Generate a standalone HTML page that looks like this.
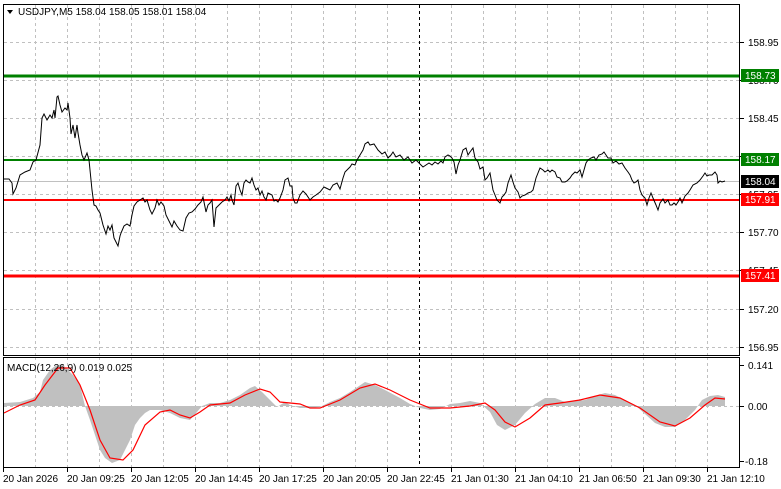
<!DOCTYPE html>
<html><head><meta charset="utf-8"><style>
html,body{margin:0;padding:0;background:#fff;width:781px;height:489px;overflow:hidden}
svg{display:block;font-family:"Liberation Sans","DejaVu Sans",sans-serif}
</style></head><body>
<svg width="781" height="489" viewBox="0 0 781 489" xmlns="http://www.w3.org/2000/svg">
<rect width="781" height="489" fill="#fff"/>
<g stroke="#c0c0c0" stroke-width="1" stroke-dasharray="3,3" fill="none">
<path d="M35.5 5V355M67.5 5V355M99.5 5V355M131.5 5V355M163.5 5V355M195.5 5V355M227.5 5V355M259.5 5V355M291.5 5V355M323.5 5V355M355.5 5V355M387.5 5V355M451.5 5V355M483.5 5V355M515.5 5V355M547.5 5V355M579.5 5V355M611.5 5V355M643.5 5V355M675.5 5V355M707.5 5V355"/>
<path d="M35.5 357V467M67.5 357V467M99.5 357V467M131.5 357V467M163.5 357V467M195.5 357V467M227.5 357V467M259.5 357V467M291.5 357V467M323.5 357V467M355.5 357V467M387.5 357V467M451.5 357V467M483.5 357V467M515.5 357V467M547.5 357V467M579.5 357V467M611.5 357V467M643.5 357V467M675.5 357V467M707.5 357V467"/>
<path d="M4 42.5H740M4 80.5H740M4 118.5H740M4 156.5H740M4 194.5H740M4 232.5H740M4 270.5H740M4 309.5H740M4 347.5H740M4 406.5H740"/>
</g>
<path d="M419.5 5V467" stroke="#000" stroke-dasharray="3,3"/>
<line x1="4" y1="181.5" x2="740" y2="181.5" stroke="#c0c0c0"/>
<line x1="4" y1="76" x2="740" y2="76" stroke="#008000" stroke-width="3"/>
<line x1="4" y1="160" x2="740" y2="160" stroke="#008000" stroke-width="2"/>
<line x1="4" y1="200" x2="740" y2="200" stroke="#ff0000" stroke-width="2"/>
<line x1="4" y1="276" x2="740" y2="276" stroke="#ff0000" stroke-width="3"/>
<polyline fill="none" stroke="#000" stroke-width="1" points="3,179 9,179 12,183 13,194 16,188 20,175 25,172 30,170 33,162 36,160 40,145 42,118 44,114 47,120 50,115 52,118 54,110 55,118 57,97 58,96 60,105 62,112 65,108 67,110 68,103 70,118 71,134 73,125 75,138 77,125 78,133 80,145 82,155 84,160 87,153 89,160 92,190 94,205 96,206 98,210 100,213 103,225 106,234 108,226 110,230 112,225 114,238 116,242 118,246 120,236 121,233 124,226 127,224 130,226 132,215 134,206 137,202 140,200 143,198 145,202 147,200 150,210 152,214 155,208 157,200 159,205 161,202 164,206 166,215 170,223 172,227 174,221 177,226 180,230 183,231 186,218 189,213 192,212 195,209 198,205 201,202 203,197 206,212 208,205 210,203 212,200 214,227 216,208 218,206 220,204 222,202 225,200 227,197 229,201 231,195 232,200 234,205 236,186 238,183 240,190 242,195 244,183 246,180 248,182 250,183 252,178 254,185 256,190 258,188 260,195 262,191 264,197 266,200 268,193 272,195 274,201 276,200 278,202 280,198 283,190 285,180 288,178 290,186 292,186 293,198 295,203 297,203 300,195 303,191 306,194 310,200 313,197 316,195 320,192 324,187 326,188 330,190 333,185 337,183 340,189 343,178 345,172 347,170 350,167 352,164 355,165 357,160 360,155 363,150 365,144 368,142 370,145 374,144 378,150 382,154 385,152 388,158 391,155 393,152 396,157 400,155 404,160 408,157 412,163 416,160 419,163 423,167 426,165 429,163 432,165 435,162 438,164 441,161 443,163 445,157 448,155 450,156 452,158 454,162 456,174 458,165 460,160 463,150 466,148 468,155 470,152 473,148 475,158 478,162 480,169 483,167 485,180 487,178 490,173 493,190 495,195 497,200 500,203 502,197 504,195 506,192 508,183 511,175 513,182 515,188 518,192 520,198 522,196 525,195 528,193 531,192 533,190 536,178 540,168 543,170 545,172 548,170 550,172 552,170 555,172 557,177 560,178 562,182 565,182 567,181 570,178 572,175 575,172 577,173 580,170 582,177 584,170 586,163 588,160 591,158 594,157 596,160 599,155 602,154 604,152 606,155 608,158 611,158 613,163 616,161 619,164 622,163 625,168 628,172 630,175 632,180 634,183 636,182 638,180 640,190 642,195 645,198 647,205 649,198 651,193 653,198 656,205 658,210 660,203 663,199 665,203 668,200 670,205 672,205 674,203 676,205 678,202 680,198 682,203 685,196 688,193 690,190 693,185 697,183 700,180 703,176 705,173 707,176 709,175 712,175 715,172 717,175 718,183 720,181 722,182 725,181"/>
<polygon fill="#c0c0c0" points="4,406 4,403 20,402 33,398 40,392 43,380 50,370 55,366 62,364 68,370 73,375 80,385 85,406 90,420 95,435 100,450 105,458 112,463 120,460 125,450 130,440 135,425 140,418 145,413 150,410 160,410 170,413 180,418 190,420 197,412 202,406 210,403 220,403 230,400 240,395 250,388 255,386 262,392 270,400 277,407 285,402 290,405 300,408 310,408 320,407 330,402 340,398 350,392 365,382 375,385 385,390 400,398 410,404 420,408 430,410 440,409 450,404 460,403 470,401 480,403 490,412 497,425 505,430 515,425 525,413 535,404 545,398 555,398 565,402 575,401 585,400 595,396 605,393 615,395 625,400 635,405 645,414 655,423 665,427 675,427 685,420 695,410 702,400 710,396 718,395 725,397 725,406"/>
<polyline fill="none" stroke="#ff0000" stroke-width="1.2" points="4,413 20,405 35,400 45,385 58,368 70,368 80,385 90,410 100,440 110,458 123,460 133,450 145,425 160,412 170,410 180,415 190,418 200,412 210,405 230,403 245,395 260,389 270,392 280,402 300,404 310,408 320,408 340,400 360,388 375,384 390,390 410,400 430,408 450,408 470,406 485,403 495,410 505,422 515,427 530,418 545,405 560,403 580,400 600,395 620,398 640,408 660,422 675,426 690,418 705,405 715,398 725,399"/>
<g stroke="#000" fill="none" stroke-width="1">
<rect x="3.5" y="4.5" width="736" height="351"/>
<rect x="3.5" y="357.5" width="736" height="110"/>
<path d="M3.5 468V472M67.5 468V472M131.5 468V472M195.5 468V472M259.5 468V472M323.5 468V472M387.5 468V472M451.5 468V472M515.5 468V472M579.5 468V472M643.5 468V472M707.5 468V472"/>
<path d="M740 42.5H744M740 80.5H744M740 118.5H744M740 156.5H744M740 194.5H744M740 232.5H744M740 270.5H744M740 309.5H744M740 347.5H744M740 365.5H744M740 406.5H744M740 461.5H744"/>
</g>
<g font-size="10" fill="#000">
<text x="748" y="46">158.95</text>
<text x="748" y="84">158.70</text>
<text x="748" y="122">158.45</text>
<text x="748" y="198">157.95</text>
<text x="748" y="236">157.70</text>
<text x="748" y="274">157.45</text>
<text x="748" y="313">157.20</text>
<text x="748" y="351">156.95</text>
<text x="748" y="369">0.141</text>
<text x="748" y="410">0.00</text>
<text x="745" y="465">-0.18</text>
</g>
<g font-size="10" fill="#fff">
<rect x="741" y="69" width="38" height="13" fill="#008000"/>
<text x="745" y="79">158.73</text>
<rect x="741" y="153" width="38" height="13" fill="#008000"/>
<text x="745" y="163">158.17</text>
<rect x="741" y="175" width="38" height="13" fill="#000"/>
<text x="745" y="185">158.04</text>
<rect x="741" y="193" width="38" height="13" fill="#ff0000"/>
<text x="745" y="203">157.91</text>
<rect x="741" y="269" width="38" height="13" fill="#ff0000"/>
<text x="745" y="279">157.41</text>
</g>
<path d="M7 10H13L10 14Z" fill="#000"/>
<text x="18" y="15" font-size="10" fill="#000">USDJPY,M5  158.04 158.05 158.01 158.04</text>
<text x="7" y="371" font-size="10" fill="#000">MACD(12,26,9) 0.019 0.025</text>
<g font-size="10" fill="#000">
<text x="3" y="482">20 Jan 2026</text>
<text x="67" y="482">20 Jan 09:25</text>
<text x="131" y="482">20 Jan 12:05</text>
<text x="195" y="482">20 Jan 14:45</text>
<text x="259" y="482">20 Jan 17:25</text>
<text x="323" y="482">20 Jan 20:05</text>
<text x="387" y="482">20 Jan 22:45</text>
<text x="451" y="482">21 Jan 01:30</text>
<text x="515" y="482">21 Jan 04:10</text>
<text x="579" y="482">21 Jan 06:50</text>
<text x="643" y="482">21 Jan 09:30</text>
<text x="707" y="482">21 Jan 12:10</text>
</g>
</svg>
</body></html>
